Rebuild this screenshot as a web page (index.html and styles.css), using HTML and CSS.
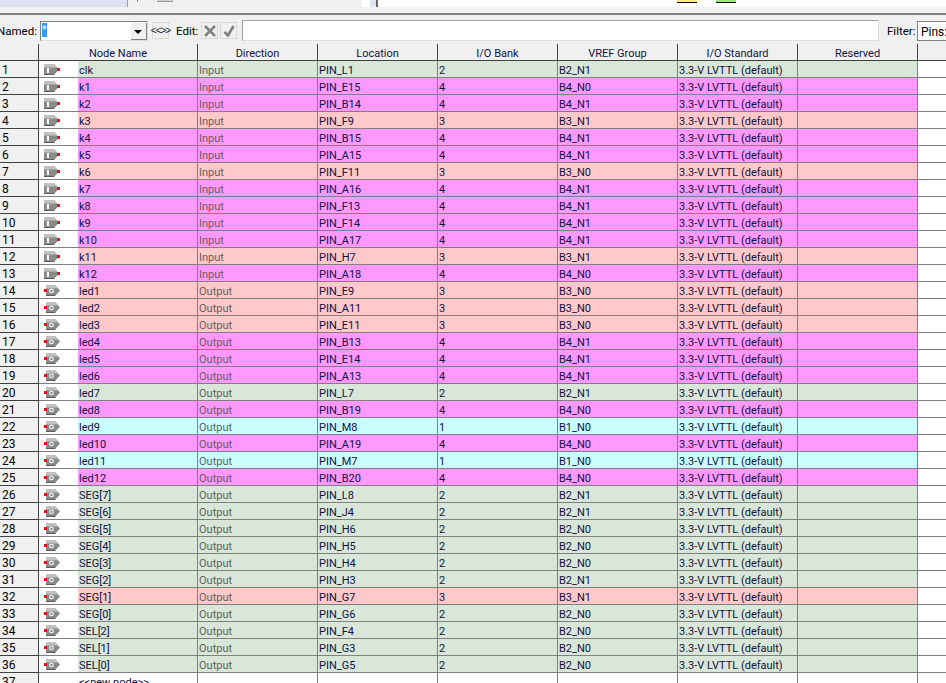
FILE: index.html
```html
<!DOCTYPE html>
<html lang="en">
<head>
  <meta charset="UTF-8">
  <title>Pin Planner</title>
  <link rel="stylesheet" href="styles.css">
</head>
<body>
  <svg class="defs" width="0" height="0">
    <symbol id="pin-in" viewBox="0 0 16 11">
      <path d="M0 0H10L15 5.5L10 11H0Z" fill="#8a8a8a"/>
      <path d="M0 0H10L13 3.5H0Z" fill="#c0c0c0"/>
      <path d="M0 10H10.5L10 11H0Z" fill="#5c5c5c"/>
      <rect x="3" y="4" width="2" height="5" fill="#fff"/>
      <rect x="13" y="4" width="3" height="3" fill="#e8101c"/>
    </symbol>
    <symbol id="pin-out" viewBox="0 0 16 11">
      <path d="M2 0H11L16 5.5L11 11H2Z" fill="#8a8a8a"/>
      <path d="M2 0H11L14 3.5H2Z" fill="#c0c0c0"/>
      <path d="M2 10H11.5L11 11H2Z" fill="#5c5c5c"/>
      <circle cx="7.5" cy="6" r="1.8" fill="none" stroke="#fff" stroke-width="1.1"/>
      <rect x="0" y="4" width="3" height="3" fill="#e8101c"/>
    </symbol>
  </svg>

  <div class="topstrip">
    <div class="panel-left"></div>
    <div class="panel-mid"><div class="scroll"><div class="thumb"></div></div></div>
    <div class="panel-gap"></div>
    <div class="panel-right">
      <span class="chip chip-y"></span>
      <span class="chip chip-g"></span>
    </div>
  </div>

  <div class="toolbar">
    <span class="lbl lbl-named">Named:</span>
    <div class="combo"><span class="sel">*</span><span class="drop"></span></div>
    <button class="tbtn tbtn-wide">&lt;&lt;&gt;&gt;</button>
    <span class="lbl lbl-edit">Edit:</span>
    <button class="tbtn tbtn-x">
      <svg width="12" height="12" viewBox="0 0 12 12"><path d="M1 1L11 11M11 1L1 11" stroke="#808080" stroke-width="2.6"/></svg>
    </button>
    <button class="tbtn tbtn-x">
      <svg width="12" height="12" viewBox="0 0 12 12"><path d="M1.5 7L5 10.5L10.5 1" fill="none" stroke="#808080" stroke-width="2.6"/></svg>
    </button>
    <div class="editbox"></div>
    <span class="lbl lbl-filter">Filter:</span>
    <div class="filterbox">Pins:</div>
  </div>

  <table class="pins">
    <colgroup>
      <col class="c-num"><col class="c-icon"><col class="c-name"><col class="c-w"><col class="c-w"><col class="c-w"><col class="c-w"><col class="c-w"><col class="c-w"><col class="c-end">
    </colgroup>
    <thead>
      <tr><th></th><th colspan="2">Node Name</th><th>Direction</th><th>Location</th><th>I/O Bank</th><th>VREF Group</th><th>I/O Standard</th><th>Reserved</th><th class="end"></th></tr>
    </thead>
    <tbody>
      <tr class="green"><td class="num">1</td><td class="ico"><svg><use href="#pin-in"/></svg></td><td>clk</td><td class="dir">Input</td><td>PIN_L1</td><td>2</td><td>B2_N1</td><td>3.3-V LVTTL (default)</td><td></td><td class="end"></td></tr>
      <tr class="pink"><td class="num">2</td><td class="ico"><svg><use href="#pin-in"/></svg></td><td>k1</td><td class="dir">Input</td><td>PIN_E15</td><td>4</td><td>B4_N0</td><td>3.3-V LVTTL (default)</td><td></td><td class="end"></td></tr>
      <tr class="pink"><td class="num">3</td><td class="ico"><svg><use href="#pin-in"/></svg></td><td>k2</td><td class="dir">Input</td><td>PIN_B14</td><td>4</td><td>B4_N1</td><td>3.3-V LVTTL (default)</td><td></td><td class="end"></td></tr>
      <tr class="salmon"><td class="num">4</td><td class="ico"><svg><use href="#pin-in"/></svg></td><td>k3</td><td class="dir">Input</td><td>PIN_F9</td><td>3</td><td>B3_N1</td><td>3.3-V LVTTL (default)</td><td></td><td class="end"></td></tr>
      <tr class="pink"><td class="num">5</td><td class="ico"><svg><use href="#pin-in"/></svg></td><td>k4</td><td class="dir">Input</td><td>PIN_B15</td><td>4</td><td>B4_N1</td><td>3.3-V LVTTL (default)</td><td></td><td class="end"></td></tr>
      <tr class="pink"><td class="num">6</td><td class="ico"><svg><use href="#pin-in"/></svg></td><td>k5</td><td class="dir">Input</td><td>PIN_A15</td><td>4</td><td>B4_N1</td><td>3.3-V LVTTL (default)</td><td></td><td class="end"></td></tr>
      <tr class="salmon"><td class="num">7</td><td class="ico"><svg><use href="#pin-in"/></svg></td><td>k6</td><td class="dir">Input</td><td>PIN_F11</td><td>3</td><td>B3_N0</td><td>3.3-V LVTTL (default)</td><td></td><td class="end"></td></tr>
      <tr class="pink"><td class="num">8</td><td class="ico"><svg><use href="#pin-in"/></svg></td><td>k7</td><td class="dir">Input</td><td>PIN_A16</td><td>4</td><td>B4_N1</td><td>3.3-V LVTTL (default)</td><td></td><td class="end"></td></tr>
      <tr class="pink"><td class="num">9</td><td class="ico"><svg><use href="#pin-in"/></svg></td><td>k8</td><td class="dir">Input</td><td>PIN_F13</td><td>4</td><td>B4_N1</td><td>3.3-V LVTTL (default)</td><td></td><td class="end"></td></tr>
      <tr class="pink"><td class="num">10</td><td class="ico"><svg><use href="#pin-in"/></svg></td><td>k9</td><td class="dir">Input</td><td>PIN_F14</td><td>4</td><td>B4_N1</td><td>3.3-V LVTTL (default)</td><td></td><td class="end"></td></tr>
      <tr class="pink"><td class="num">11</td><td class="ico"><svg><use href="#pin-in"/></svg></td><td>k10</td><td class="dir">Input</td><td>PIN_A17</td><td>4</td><td>B4_N1</td><td>3.3-V LVTTL (default)</td><td></td><td class="end"></td></tr>
      <tr class="salmon"><td class="num">12</td><td class="ico"><svg><use href="#pin-in"/></svg></td><td>k11</td><td class="dir">Input</td><td>PIN_H7</td><td>3</td><td>B3_N1</td><td>3.3-V LVTTL (default)</td><td></td><td class="end"></td></tr>
      <tr class="pink"><td class="num">13</td><td class="ico"><svg><use href="#pin-in"/></svg></td><td>k12</td><td class="dir">Input</td><td>PIN_A18</td><td>4</td><td>B4_N0</td><td>3.3-V LVTTL (default)</td><td></td><td class="end"></td></tr>
      <tr class="salmon"><td class="num">14</td><td class="ico"><svg><use href="#pin-out"/></svg></td><td>led1</td><td class="dir">Output</td><td>PIN_E9</td><td>3</td><td>B3_N0</td><td>3.3-V LVTTL (default)</td><td></td><td class="end"></td></tr>
      <tr class="salmon"><td class="num">15</td><td class="ico"><svg><use href="#pin-out"/></svg></td><td>led2</td><td class="dir">Output</td><td>PIN_A11</td><td>3</td><td>B3_N0</td><td>3.3-V LVTTL (default)</td><td></td><td class="end"></td></tr>
      <tr class="salmon"><td class="num">16</td><td class="ico"><svg><use href="#pin-out"/></svg></td><td>led3</td><td class="dir">Output</td><td>PIN_E11</td><td>3</td><td>B3_N0</td><td>3.3-V LVTTL (default)</td><td></td><td class="end"></td></tr>
      <tr class="pink"><td class="num">17</td><td class="ico"><svg><use href="#pin-out"/></svg></td><td>led4</td><td class="dir">Output</td><td>PIN_B13</td><td>4</td><td>B4_N1</td><td>3.3-V LVTTL (default)</td><td></td><td class="end"></td></tr>
      <tr class="pink"><td class="num">18</td><td class="ico"><svg><use href="#pin-out"/></svg></td><td>led5</td><td class="dir">Output</td><td>PIN_E14</td><td>4</td><td>B4_N1</td><td>3.3-V LVTTL (default)</td><td></td><td class="end"></td></tr>
      <tr class="pink"><td class="num">19</td><td class="ico"><svg><use href="#pin-out"/></svg></td><td>led6</td><td class="dir">Output</td><td>PIN_A13</td><td>4</td><td>B4_N1</td><td>3.3-V LVTTL (default)</td><td></td><td class="end"></td></tr>
      <tr class="green"><td class="num">20</td><td class="ico"><svg><use href="#pin-out"/></svg></td><td>led7</td><td class="dir">Output</td><td>PIN_L7</td><td>2</td><td>B2_N1</td><td>3.3-V LVTTL (default)</td><td></td><td class="end"></td></tr>
      <tr class="pink"><td class="num">21</td><td class="ico"><svg><use href="#pin-out"/></svg></td><td>led8</td><td class="dir">Output</td><td>PIN_B19</td><td>4</td><td>B4_N0</td><td>3.3-V LVTTL (default)</td><td></td><td class="end"></td></tr>
      <tr class="cyan"><td class="num">22</td><td class="ico"><svg><use href="#pin-out"/></svg></td><td>led9</td><td class="dir">Output</td><td>PIN_M8</td><td>1</td><td>B1_N0</td><td>3.3-V LVTTL (default)</td><td></td><td class="end"></td></tr>
      <tr class="pink"><td class="num">23</td><td class="ico"><svg><use href="#pin-out"/></svg></td><td>led10</td><td class="dir">Output</td><td>PIN_A19</td><td>4</td><td>B4_N0</td><td>3.3-V LVTTL (default)</td><td></td><td class="end"></td></tr>
      <tr class="cyan"><td class="num">24</td><td class="ico"><svg><use href="#pin-out"/></svg></td><td>led11</td><td class="dir">Output</td><td>PIN_M7</td><td>1</td><td>B1_N0</td><td>3.3-V LVTTL (default)</td><td></td><td class="end"></td></tr>
      <tr class="pink"><td class="num">25</td><td class="ico"><svg><use href="#pin-out"/></svg></td><td>led12</td><td class="dir">Output</td><td>PIN_B20</td><td>4</td><td>B4_N0</td><td>3.3-V LVTTL (default)</td><td></td><td class="end"></td></tr>
      <tr class="green"><td class="num">26</td><td class="ico"><svg><use href="#pin-out"/></svg></td><td>SEG[7]</td><td class="dir">Output</td><td>PIN_L8</td><td>2</td><td>B2_N1</td><td>3.3-V LVTTL (default)</td><td></td><td class="end"></td></tr>
      <tr class="green"><td class="num">27</td><td class="ico"><svg><use href="#pin-out"/></svg></td><td>SEG[6]</td><td class="dir">Output</td><td>PIN_J4</td><td>2</td><td>B2_N1</td><td>3.3-V LVTTL (default)</td><td></td><td class="end"></td></tr>
      <tr class="green"><td class="num">28</td><td class="ico"><svg><use href="#pin-out"/></svg></td><td>SEG[5]</td><td class="dir">Output</td><td>PIN_H6</td><td>2</td><td>B2_N0</td><td>3.3-V LVTTL (default)</td><td></td><td class="end"></td></tr>
      <tr class="green"><td class="num">29</td><td class="ico"><svg><use href="#pin-out"/></svg></td><td>SEG[4]</td><td class="dir">Output</td><td>PIN_H5</td><td>2</td><td>B2_N0</td><td>3.3-V LVTTL (default)</td><td></td><td class="end"></td></tr>
      <tr class="green"><td class="num">30</td><td class="ico"><svg><use href="#pin-out"/></svg></td><td>SEG[3]</td><td class="dir">Output</td><td>PIN_H4</td><td>2</td><td>B2_N0</td><td>3.3-V LVTTL (default)</td><td></td><td class="end"></td></tr>
      <tr class="green"><td class="num">31</td><td class="ico"><svg><use href="#pin-out"/></svg></td><td>SEG[2]</td><td class="dir">Output</td><td>PIN_H3</td><td>2</td><td>B2_N1</td><td>3.3-V LVTTL (default)</td><td></td><td class="end"></td></tr>
      <tr class="salmon"><td class="num">32</td><td class="ico"><svg><use href="#pin-out"/></svg></td><td>SEG[1]</td><td class="dir">Output</td><td>PIN_G7</td><td>3</td><td>B3_N1</td><td>3.3-V LVTTL (default)</td><td></td><td class="end"></td></tr>
      <tr class="green"><td class="num">33</td><td class="ico"><svg><use href="#pin-out"/></svg></td><td>SEG[0]</td><td class="dir">Output</td><td>PIN_G6</td><td>2</td><td>B2_N0</td><td>3.3-V LVTTL (default)</td><td></td><td class="end"></td></tr>
      <tr class="green"><td class="num">34</td><td class="ico"><svg><use href="#pin-out"/></svg></td><td>SEL[2]</td><td class="dir">Output</td><td>PIN_F4</td><td>2</td><td>B2_N0</td><td>3.3-V LVTTL (default)</td><td></td><td class="end"></td></tr>
      <tr class="green"><td class="num">35</td><td class="ico"><svg><use href="#pin-out"/></svg></td><td>SEL[1]</td><td class="dir">Output</td><td>PIN_G3</td><td>2</td><td>B2_N0</td><td>3.3-V LVTTL (default)</td><td></td><td class="end"></td></tr>
      <tr class="green"><td class="num">36</td><td class="ico"><svg><use href="#pin-out"/></svg></td><td>SEL[0]</td><td class="dir">Output</td><td>PIN_G5</td><td>2</td><td>B2_N0</td><td>3.3-V LVTTL (default)</td><td></td><td class="end"></td></tr>
      <tr class="newrow"><td class="num">37</td><td class="ico"></td><td>&lt;&lt;new node&gt;&gt;</td><td></td><td></td><td></td><td></td><td></td><td></td><td class="end"></td></tr>
    </tbody>
  </table>
</body>
</html>
```

FILE: styles.css
```css
html, body {
  margin: 0;
  height: 683px;
  overflow: hidden;
  background: #fff;
}
body {
  font-family: Roboto, "Liberation Sans", sans-serif;
  font-size: 11px;
  color: #000;
}
.defs {
  display: block;
  height: 0;
}

/* top strip */
.topstrip {
  display: flex;
  align-items: flex-start;
  height: 13px;
  background: #f0f0f0;
}
.panel-left {
  width: 127px;
  height: 7px;
  background: #dde3f5;
  border-right: 1px solid #a0a0a0;
}
.panel-mid {
  width: 225px;
  height: 7px;
  padding-left: 9px;
  background: #f0f0f0;
  border-right: 8px solid #fff;
}
.scroll {
  width: 215px;
  height: 2px;
  border-left: 1px solid #808080;
}
.thumb {
  width: 16px;
  height: 1px;
  margin-left: 19px;
  background: #d0d0d0;
  border-bottom: 1px solid #999;
}
.panel-gap {
  width: 6px;
  height: 7px;
  background: #dde3f5;
}
.panel-right {
  flex: 1;
  display: flex;
  gap: 19px;
  height: 7px;
  padding-left: 299px;
  background: #fff;
  border-left: 2px solid #666;
}
.chip {
  width: 20px;
  height: 2px;
  border-bottom: 1px solid #000;
}
.chip-y { background: #ffef80; }
.chip-g { background: #a0e880; }

/* toolbar */
.toolbar {
  display: flex;
  align-items: center;
  height: 31px;
  box-sizing: border-box;
  padding-top: 2px;
  background: #f0f0f0;
  border-top: 2px solid #808080;
  white-space: nowrap;
  overflow: hidden;
}
.lbl {
  flex: none;
  font-size: 11.5px;
}
.lbl-named {
  margin-left: -3px;
  width: 43px;
}
.combo {
  flex: none;
  position: relative;
  width: 108px;
  height: 20px;
  box-sizing: border-box;
  background: #fff;
  border: 1px solid #808080;
  border-right-color: #ddd;
  border-bottom-color: #ddd;
  margin-right: 4px;
}
.sel {
  display: inline-block;
  margin-left: 1px;
  margin-top: 1px;
  width: 5px;
  height: 14px;
  background: #3399ff;
  color: #fff;
  font-size: 10px;
  line-height: 14px;
  vertical-align: top;
}
.drop {
  position: absolute;
  right: 0;
  top: 0;
  width: 17px;
  height: 18px;
  background: #f0f0f0;
  box-shadow: inset 1px 1px 0 #fff, inset -1px -1px 0 #808080;
}
.drop::after {
  content: "";
  position: absolute;
  left: 4px;
  top: 8px;
  border: 4px solid transparent;
  border-top: 4px solid #000;
  border-bottom: 0;
}
.tbtn {
  flex: none;
  display: flex;
  align-items: center;
  justify-content: center;
  width: 17px;
  height: 17px;
  padding: 0;
  background: #f0f0f0;
  border: 1px solid #d8d8d8;
  font: 10px "Liberation Sans", sans-serif;
  color: #222;
}
.tbtn-wide {
  margin-right: 7px;
  letter-spacing: -1px;
}
.lbl-edit {
  width: 25px;
}
.tbtn-x {
  margin-right: 2px;
}
.editbox {
  flex: none;
  width: 637px;
  height: 21px;
  margin-left: 3px;
  margin-right: 8px;
  box-sizing: border-box;
  background: #fff;
  border: 1px solid #a0a0a0;
  border-right-color: #ddd;
  border-bottom-color: #ddd;
}
.lbl-filter {
  width: 30px;
}
.filterbox {
  flex: none;
  width: 60px;
  height: 20px;
  box-sizing: border-box;
  padding: 3px 0 0 3px;
  font-size: 12px;
  background: #fff;
  border: 1px solid #808080;
  border-right: 0;
}

/* pin table */
.pins {
  table-layout: fixed;
  width: 946px;
  border-collapse: separate;
  border-spacing: 0;
}
.c-num { width: 39px; }
.c-icon { width: 39px; }
.c-name { width: 120px; }
.c-w { width: 120px; }
.c-end { width: 28px; }

.pins th {
  height: 17px;
  box-sizing: border-box;
  padding: 3px 0 0;
  background: #f0f0f0;
  border-right: 1px solid #404040;
  border-bottom: 1px solid #404040;
  font-weight: normal;
  text-align: center;
  color: #101040;
}
.pins td {
  height: 17px;
  box-sizing: border-box;
  padding: 3px 0 0 1px;
  border-right: 1px solid #808080;
  border-bottom: 1px solid #808080;
  white-space: nowrap;
  overflow: hidden;
  color: #101040;
}
.pins td.num {
  padding: 2px 0 0 2px;
  font-size: 12px;
  background: #f0f0f0;
  border-right: 1px solid #404040;
  border-bottom: 1px solid #404040;
  color: #000;
}
.pins td.ico {
  padding: 0 0 0 5px;
  background: #fff;
  border-right: 0;
  line-height: 0;
}
.ico svg {
  display: block;
  width: 16px;
  height: 11px;
}
.pins td.dir {
  color: #606060;
}
.pins th.end {
  border-right: 0;
}
.green td { background: #d9e7d9; }
.pink td { background: #ff99ff; }
.salmon td { background: #ffc9c9; }
.cyan td { background: #c9ffff; }
.pins td.end {
  background: #fff;
  border-right: 0;
}
```
